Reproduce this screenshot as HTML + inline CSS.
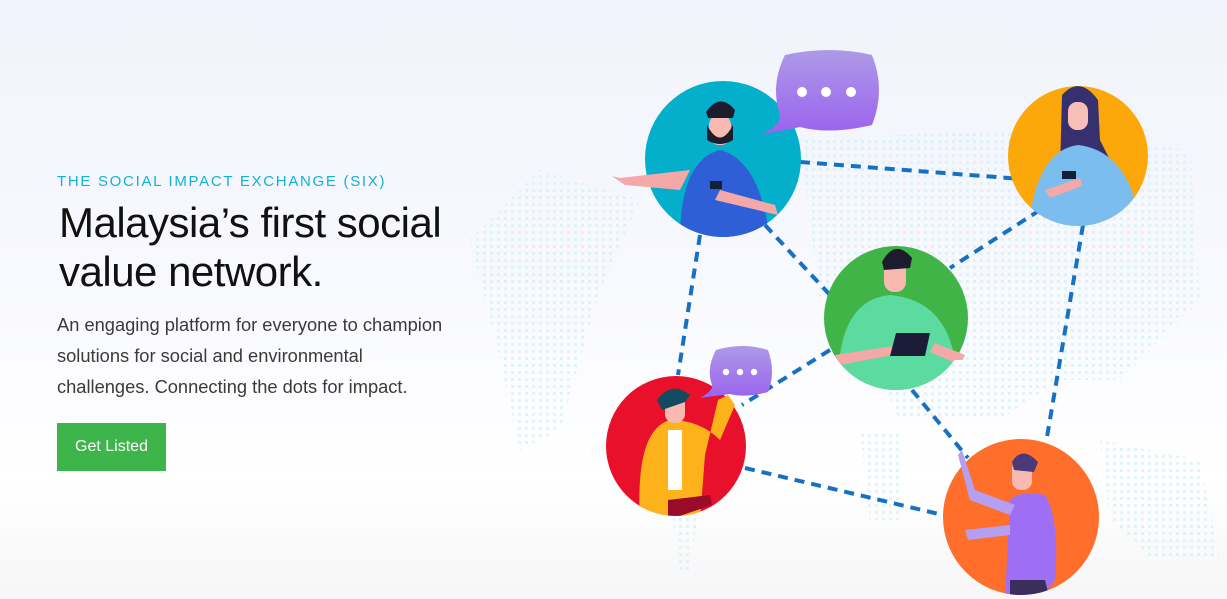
<!DOCTYPE html>
<html><head><meta charset="utf-8"><style>
html,body{margin:0;padding:0}
body{width:1227px;height:599px;overflow:hidden;position:relative;background:linear-gradient(180deg,#f1f3fc 0%,#f8f9fe 45%,#ffffff 80%,#f6f6f8 100%);font-family:"Liberation Sans",sans-serif}
.eyebrow{position:absolute;left:57px;top:173px;color:#0fb2d6;font-size:15px;letter-spacing:1.7px}
h1{position:absolute;left:59px;top:198px;margin:0;font-size:42px;line-height:49px;font-weight:500;color:#111;letter-spacing:-0.5px}
p{position:absolute;left:57px;top:309px;margin:0;width:395px;font-size:18.3px;line-height:31px;color:#3a3a3a}
.btn{position:absolute;left:57px;top:423px;width:109px;height:48px;background:#3db54a;color:#fff;font-size:16px;line-height:48px;text-align:center}
svg{position:absolute;left:0;top:0}
</style></head><body>
<svg width="1227" height="599">
<defs>
<pattern id="dots" width="7" height="7" patternUnits="userSpaceOnUse"><rect width="3" height="3" fill="#cdeef6"/></pattern>
<linearGradient id="pb" x1="0" y1="0" x2="0" y2="1"><stop offset="0" stop-color="#ad9ae8"/><stop offset="1" stop-color="#9b62ee"/></linearGradient>
<clipPath id="c1"><circle cx="723" cy="159" r="78"/><rect x="600" y="0" width="250" height="200"/></clipPath>
<clipPath id="c2"><circle cx="1078" cy="156" r="70"/><rect x="1000" y="0" width="160" height="150"/></clipPath>
<clipPath id="c3"><circle cx="896" cy="318" r="72"/><rect x="820" y="200" width="160" height="160"/></clipPath>
<clipPath id="c4"><circle cx="676" cy="446" r="70"/><rect x="600" y="370" width="160" height="70"/></clipPath>
<clipPath id="c5"><circle cx="1021" cy="517" r="78"/><rect x="940" y="420" width="180" height="110"/></clipPath>
</defs>
<g opacity="0.6">
<path d="M470 240 L540 170 L640 200 L600 290 L560 430 L520 450 L500 360 Z" fill="url(#dots)"/>
<path d="M800 140 L1000 130 L1190 150 L1200 300 L1120 380 L1060 380 L1000 420 L900 420 L870 360 L820 300 Z" fill="url(#dots)"/>
<path d="M860 430 L900 430 L900 520 L870 520 Z" fill="url(#dots)"/>
<path d="M1100 440 L1200 460 L1220 560 L1150 560 L1110 520 Z" fill="url(#dots)"/>
<path d="M670 500 L700 500 L690 570 L680 570 Z" fill="url(#dots)"/>
</g>
<g stroke="#1670c4" stroke-width="4" stroke-dasharray="10 7" fill="none">
<line x1="800" y1="162" x2="1035" y2="180"/>
<line x1="765" y1="225" x2="830" y2="295"/>
<line x1="700" y1="235" x2="678" y2="375"/>
<line x1="1040" y1="210" x2="950" y2="268"/>
<line x1="1083" y1="225" x2="1047" y2="437"/>
<line x1="830" y1="350" x2="742" y2="405"/>
<line x1="912" y1="390" x2="968" y2="458"/>
<line x1="745" y1="468" x2="943" y2="515"/>
</g>
<circle cx="723" cy="159" r="78" fill="#03afca"/>
<g clip-path="url(#c1)">
<path d="M680 240 Q680 160 720 150 Q760 160 770 240 Z" fill="#2f5fd6"/>
<path d="M690 170 L620 178 L612 176 L625 185 L680 190Z" fill="#f4a8a8"/>
<path d="M720 190 L775 205 L778 215 L715 200Z" fill="#f4a8a8"/>
<rect x="709" y="115" width="22" height="30" rx="10" fill="#f7b9b0"/>
<path d="M707 125 Q720 150 733 125 L733 140 Q720 148 707 140Z" fill="#1c1c2c"/>
<path d="M706 112 Q720 92 735 110 L733 118 L708 118Z" fill="#1c1c2c"/>
<rect x="710" y="181" width="12" height="8" fill="#14203a"/>
</g>
<path d="M785 55 Q830 45 872 55 Q886 90 872 125 Q830 135 800 127 L760 135 Q782 125 780 115 Q770 85 785 55Z" fill="url(#pb)"/>
<circle cx="802" cy="92" r="5" fill="#fff"/><circle cx="826" cy="92" r="5" fill="#fff"/><circle cx="851" cy="92" r="5" fill="#fff"/>
<circle cx="1078" cy="156" r="70" fill="#fca70a"/>
<g clip-path="url(#c2)">
<path d="M1062 95 Q1080 75 1098 100 L1100 140 Q1110 160 1115 170 L1060 170 Z" fill="#37306f"/>
<path d="M1030 215 Q1040 150 1078 145 Q1120 150 1135 200 L1110 230 L1050 230 Z" fill="#7cbdf0"/>
<rect x="1068" y="102" width="20" height="28" rx="9" fill="#f7bfb5"/>
<path d="M1045 190 L1080 178 L1082 186 L1050 198Z" fill="#f4a8a8"/>
<rect x="1062" y="171" width="14" height="8" fill="#14203a"/>
</g>
<circle cx="896" cy="318" r="72" fill="#40b447"/>
<g clip-path="url(#c3)">
<path d="M838 395 Q835 300 890 295 Q945 300 955 360 L930 395 L860 395Z" fill="#5cdba0"/>
<rect x="884" y="260" width="22" height="32" rx="10" fill="#f7b9b0"/>
<path d="M882 262 Q895 238 912 258 L910 268 L884 270Z" fill="#1c1c2c"/>
<path d="M835 355 L900 345 L903 353 L840 365Z" fill="#f4a8a8"/>
<path d="M935 343 L965 355 L960 365 L930 352Z" fill="#f4a8a8"/>
<path d="M896 333 L930 333 L925 356 L890 356Z" fill="#1c1c38"/>
</g>
<circle cx="676" cy="446" r="70" fill="#e8102a"/>
<g clip-path="url(#c4)">
<path d="M640 520 Q635 430 670 420 Q700 420 720 440 L735 405 L728 395 L718 400 L705 455 L700 520 Z" fill="#fdb21c"/>
<rect x="668" y="430" width="14" height="60" fill="#fff"/>
<rect x="665" y="395" width="20" height="28" rx="9" fill="#f7b9b0"/>
<path d="M657 400 Q672 380 690 395 L685 402 L662 410Z" fill="#134a60"/>
<path d="M668 500 L710 495 L712 505 L668 520Z" fill="#9a0b2a"/>
</g>
<path d="M716 350 Q743 342 768 350 Q776 372 768 392 Q745 398 730 394 L700 398 Q714 390 712 385 Q706 368 716 350Z" fill="url(#pb)"/>
<circle cx="726" cy="372" r="3.2" fill="#fff"/><circle cx="740" cy="372" r="3.2" fill="#fff"/><circle cx="754" cy="372" r="3.2" fill="#fff"/>
<circle cx="1021" cy="517" r="78" fill="#ff6e2a"/>
<g clip-path="url(#c5)">
<path d="M1005 600 L1010 500 Q1020 490 1045 495 Q1060 520 1055 580 L1040 600 L1010 600Z" fill="#9e6ef4"/>
<path d="M1010 580 L1045 580 L1050 600 L1010 600Z" fill="#3b2e5a"/>
<path d="M962 450 L975 490 L1015 505 L1010 515 L970 500 L958 455Z" fill="#b49ff0"/>
<path d="M965 530 L1010 525 L1010 535 L968 540Z" fill="#b49ff0"/>
<rect x="1012" y="460" width="20" height="30" rx="9" fill="#f7b9b0"/>
<path d="M1012 462 Q1022 445 1038 462 L1034 472 L1014 470Z" fill="#4a3a7a"/>
</g>
</svg>
<div class="eyebrow">THE SOCIAL IMPACT EXCHANGE (SIX)</div>
<h1>Malaysia’s first social<br>value network.</h1>
<p>An engaging platform for everyone to champion solutions for social and environmental challenges. Connecting the dots for impact.</p>
<div class="btn">Get Listed</div>
</body></html>
